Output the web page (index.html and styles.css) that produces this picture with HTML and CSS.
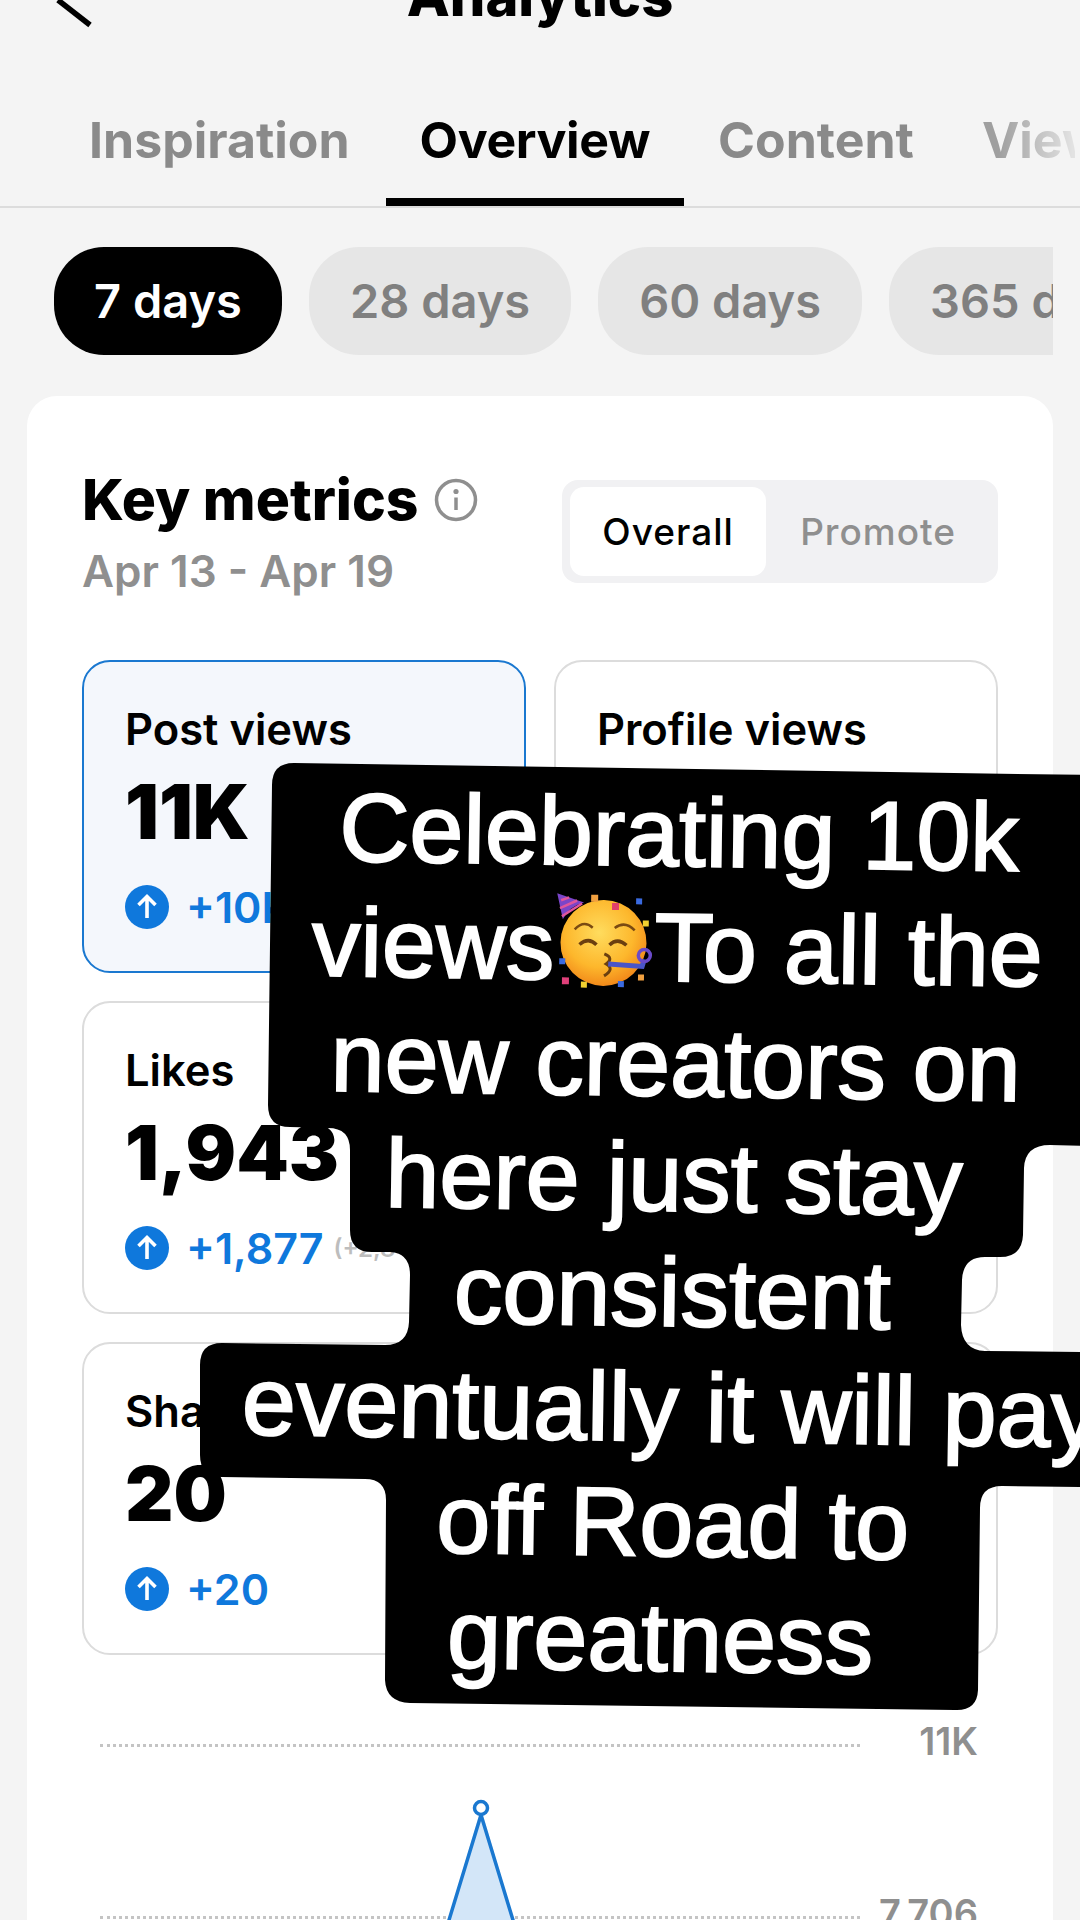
FILE: index.html
```html
<!DOCTYPE html>
<html lang="en">
<head>
    <meta charset="UTF-8">
    <meta name="viewport" content="width=device-width, initial-scale=1.0">
    <title>Analytics</title>
    <link rel="stylesheet" href="styles.css">
</head>
<body>
    <header class="topbar">
        <svg class="back" width="60" height="40" viewBox="0 0 60 40">
            <path d="M6 2 L38 27" fill="none" stroke="#000" stroke-width="5.5"/>
        </svg>
        <h1>Analytics</h1>
    </header>

    <nav class="tabs">
        <div class="tab">Inspiration</div>
        <div class="tab active">Overview</div>
        <div class="tab">Content</div>
        <div class="tab tab-fade">Viewers</div>
    </nav>

    <div class="pills">
        <div class="pill active">7 days</div>
        <div class="pill">28 days</div>
        <div class="pill">60 days</div>
        <div class="pill">365 days</div>
    </div>

    <main class="card">
        <div class="card-head">
            <div>
                <h2>Key metrics
                    <svg class="info" width="44" height="44" viewBox="0 0 44 44">
                        <circle cx="22" cy="22" r="19.5" fill="none" stroke="#8f8f8f" stroke-width="3.5"/>
                        <circle cx="22" cy="13.5" r="2.6" fill="#8f8f8f"/>
                        <path d="M22 19.5 V32" stroke="#8f8f8f" stroke-width="3.5"/>
                    </svg>
                </h2>
                <p class="dates">Apr 13 - Apr 19</p>
            </div>
            <div class="segment">
                <div class="segment-item active">Overall</div>
                <div class="segment-item">Promote</div>
            </div>
        </div>

        <div class="metrics">
            <div class="metric selected">
                <div class="metric-label">Post views</div>
                <div class="metric-value">11K</div>
                <div class="metric-delta">
                    <svg width="44" height="44" viewBox="0 0 44 44"><circle cx="22" cy="22" r="22" fill="#0f78dc"/><path d="M22 33 V12 M13.5 20 L22 11.5 L30.5 20" fill="none" stroke="#fff" stroke-width="3.6"/></svg>
                    <span>+10K</span>
                </div>
            </div>
            <div class="metric">
                <div class="metric-label">Profile views</div>
            </div>
            <div class="metric">
                <div class="metric-label">Likes</div>
                <div class="metric-value">1,943</div>
                <div class="metric-delta">
                    <svg width="44" height="44" viewBox="0 0 44 44"><circle cx="22" cy="22" r="22" fill="#0f78dc"/><path d="M22 33 V12 M13.5 20 L22 11.5 L30.5 20" fill="none" stroke="#fff" stroke-width="3.6"/></svg>
                    <span>+1,877</span>
                    <span class="percent">(+2,844%)</span>
                </div>
            </div>
            <div class="metric"></div>
            <div class="metric">
                <div class="metric-label">Shares</div>
                <div class="metric-value">20</div>
                <div class="metric-delta">
                    <svg width="44" height="44" viewBox="0 0 44 44"><circle cx="22" cy="22" r="22" fill="#0f78dc"/><path d="M22 33 V12 M13.5 20 L22 11.5 L30.5 20" fill="none" stroke="#fff" stroke-width="3.6"/></svg>
                    <span>+20</span>
                </div>
            </div>
            <div class="metric"></div>
        </div>

        <div class="chart">
            <div class="chart-row"><div class="chart-line"></div><div class="chart-label">11K</div></div>
            <div class="chart-row"><div class="chart-line"></div><div class="chart-label">7,706</div></div>
            <svg class="chart-peak" width="100" height="170" viewBox="0 0 100 170">
                <path d="M50 12 L4 170 H96 Z" fill="#d3e6f8"/>
                <path d="M50 19 L4 170 M50 19 L96 170" fill="none" stroke="#1a78d0" stroke-width="3.5"/>
                <circle cx="50" cy="12" r="6.5" fill="#fff" stroke="#1a78d0" stroke-width="3.5"/>
            </svg>
        </div>
    </main>

    <!-- caption sticker laid over the screenshot -->
    <div class="sticker">
        <svg class="sticker-shape" width="1080" height="1920" viewBox="0 0 1080 1920">
            <path d="M294 763 L1090 775 L1090 1146 L1050 1145 Q1025 1145 1024 1168 L1023 1235 Q1022 1257 1000 1257 L985 1257 Q963 1257 962 1280 L961 1325 Q962 1350 985 1351 L1090 1352 L1090 1487 L1002 1486 Q980 1486 980 1508 L978 1690 Q977 1711 955 1710 L410 1703 Q386 1702 385 1680 L386 1500 Q386 1479 365 1479 L222 1477 Q200 1477 200 1455 L200 1365 Q200 1343 222 1343 L385 1345 Q408 1345 409 1322 L410 1275 Q410 1253 390 1252 L372 1252 Q350 1252 350 1230 L350 1150 Q350 1128 328 1128 L290 1127 Q268 1127 268 1105 L272 785 Q272 763 294 763 Z" fill="#000"/>
        </svg>
        <div class="sticker-text">
            <div>Celebrating 10k</div>
            <div>views<svg class="emoji" width="100" height="100" viewBox="0 0 100 100">
                <defs>
                    <radialGradient id="face" cx="45%" cy="38%" r="62%">
                        <stop offset="0%" stop-color="#ffdc5e"/>
                        <stop offset="65%" stop-color="#fdb72c"/>
                        <stop offset="100%" stop-color="#f28a1a"/>
                    </radialGradient>
                </defs>
                <circle cx="49" cy="50" r="43" fill="url(#face)"/>
                <path d="M2 1 L29 10 Q14 14 8 27 Z" fill="#7a45c8"/>
                <path d="M6 8 L14 5 M5 16 L22 8 M7 24 L27 11" stroke="#e0559c" stroke-width="2.5" fill="none"/>
                <path d="M20 37 Q29 27 38 35 M60 35 Q70 27 80 37" fill="none" stroke="#7a4a12" stroke-width="2.5"/>
                <path d="M25 52 Q34 44 42 52 M55 52 Q63 44 72 52" fill="none" stroke="#6b3f10" stroke-width="3.5"/>
                <path d="M50 61 Q60 65 52 71 Q61 76 50 83" fill="none" stroke="#6b3f10" stroke-width="3"/>
                <path d="M54 71 L88 73 L90 66" fill="none" stroke="#4a55c8" stroke-width="5"/>
                <circle cx="90" cy="62" r="6" fill="none" stroke="#6a4ac8" stroke-width="3.5"/>
                <rect x="36" y="2" width="7" height="7" fill="#f0a040"/>
                <rect x="57" y="10" width="7" height="7" fill="#e0406a"/>
                <rect x="81" y="5" width="6" height="6" fill="#3a6ae0"/>
                <rect x="88" y="27" width="6" height="6" fill="#f0d030"/>
                <rect x="5" y="66" width="6" height="6" fill="#3a6ae0"/>
                <rect x="8" y="85" width="7" height="7" fill="#e0407a"/>
                <rect x="27" y="89" width="6" height="6" fill="#f0d030"/>
                <rect x="64" y="88" width="6" height="6" fill="#3a6ae0"/>
                <rect x="84" y="81" width="6" height="6" fill="#f0a040"/>
            </svg>To all the</div>
            <div>new creators on</div>
            <div>here just stay</div>
            <div>consistent</div>
            <div>eventually it will pay</div>
            <div class="sticker-road">off Road to</div>
            <div class="sticker-last">greatness</div>
        </div>
    </div>
</body>
</html>
```

FILE: styles.css
```css
* {
    box-sizing: border-box;
}
html, body {
    margin: 0;
    height: 1920px;
    overflow: hidden;
}
body {
    position: relative;
    width: 1080px;
    font-family: Inter, "Noto Sans", sans-serif;
    background-color: #f4f4f4;
    color: #000;
}
.topbar {
    display: flow-root;
    position: relative;
    height: 60px;
}
.back {
    position: absolute;
    left: 52px;
    top: -2px;
}
h1 {
    margin: -42px 0 0;
    font-size: 56px;
    line-height: 76px;
    font-weight: 800;
    text-align: center;
}
.tabs {
    display: flex;
    height: 148px;
    padding-left: 55px;
    border-bottom: 2px solid #dcdcdc;
    overflow: hidden;
}
.tab {
    flex: none;
    height: 146px;
    padding: 50px 34px 0;
    font-size: 50px;
    line-height: 60px;
    font-weight: 700;
    color: #8a8a8a;
    border-bottom: 8px solid transparent;
}
.tab.active {
    margin-left: 2px;
    letter-spacing: -0.4px;
    color: #000;
    border-bottom-color: #000;
}
.tab-fade {
    width: 127px;
    overflow: hidden;
    white-space: nowrap;
    -webkit-mask-image: linear-gradient(90deg, rgba(0,0,0,0.8) 40%, rgba(0,0,0,0.15) 100%);
    mask-image: linear-gradient(90deg, rgba(0,0,0,0.8) 40%, rgba(0,0,0,0.15) 100%);
}
.pills {
    display: flex;
    gap: 27px;
    width: 1053px;
    margin-top: 39px;
    padding-left: 54px;
    overflow: hidden;
}
.pill {
    flex: none;
    height: 108px;
    padding: 0 41px;
    border-radius: 50px;
    background-color: #e6e6e6;
    color: #808080;
    font-size: 47px;
    line-height: 108px;
    font-weight: 600;
    white-space: nowrap;
}
.pill.active {
    padding: 0 40px;
    background-color: #000;
    color: #fff;
}
.card {
    height: 1600px;
    margin: 41px 27px 0;
    padding: 84px 55px 0;
    border-radius: 30px;
    background-color: #fff;
}
.card-head {
    display: flex;
    justify-content: space-between;
    height: 180px;
}
h2 {
    display: flex;
    align-items: center;
    gap: 15px;
    margin: -16px 0 0;
    font-size: 57px;
    line-height: 72px;
    font-weight: 800;
}
.dates {
    margin: 9px 0 0;
    font-size: 44px;
    line-height: 52px;
    font-weight: 600;
    color: #8f8f8f;
}
.segment {
    display: flex;
    width: 436px;
    height: 103px;
    padding: 7px 8px;
    border-radius: 16px;
    background-color: #f1f1f3;
    font-size: 37px;
}
.segment-item {
    padding: 0 34px;
    line-height: 89px;
    font-weight: 500;
    letter-spacing: 1px;
    color: #8f8f8f;
}
.segment-item.active {
    width: 197px;
    padding: 0;
    text-align: center;
    border-radius: 14px;
    background-color: #fff;
    color: #000;
}
.metrics {
    display: grid;
    grid-template-columns: 444px 444px;
    grid-auto-rows: 313px;
    gap: 28px;
}
.metric {
    padding: 43px 41px 0;
    border: 2px solid #dcdcdc;
    border-radius: 28px;
}
.metric.selected {
    border-color: #1a78d0;
    background-color: #f4f7fc;
}
.metric-label {
    font-size: 43.5px;
    line-height: 48px;
    font-weight: 600;
}
.metric-value {
    margin-top: 17px;
    font-size: 75px;
    line-height: 84px;
    font-weight: 900;
}
.metric-delta {
    display: flex;
    align-items: center;
    gap: 17px;
    margin-top: 27px;
    font-size: 43px;
    font-weight: 600;
    color: #0f78dc;
}
.metric-delta .percent {
    margin-left: -7px;
    font-size: 24px;
    color: #bdbdbd;
}
.chart {
    position: relative;
    margin-top: 4px;
    padding: 0 20px 0 18px;
}
.chart-row {
    display: flex;
    align-items: center;
    height: 172px;
}
.chart-line {
    flex: 1;
    border-top: 3px dotted #c4c4c4;
}
.chart-label {
    width: 118px;
    margin-bottom: 8px;
    text-align: right;
    font-size: 38px;
    line-height: 44px;
    font-weight: 600;
    color: #8f8f8f;
}
.chart-peak {
    position: absolute;
    left: 349px;
    top: 137px;
}
.sticker {
    position: absolute;
    left: 0;
    top: 0;
    width: 1080px;
    height: 1920px;
    overflow: hidden;
}
.sticker-shape {
    position: absolute;
    left: 0;
    top: 0;
}
.sticker-text {
    position: absolute;
    left: 180px;
    top: 775px;
    width: 1000px;
    transform: rotate(0.85deg);
    transform-origin: top center;
    font-family: "Liberation Sans", Arial, sans-serif;
    font-size: 97px;
    line-height: 115px;
    color: #fff;
    text-align: center;
    white-space: nowrap;
    -webkit-text-stroke: 2px #fff;
}
.sticker-road {
    padding-left: 8px;
}
.sticker-last {
    padding-right: 14px;
}
.emoji {
    vertical-align: -13px;
    -webkit-text-stroke: 0;
}
```
